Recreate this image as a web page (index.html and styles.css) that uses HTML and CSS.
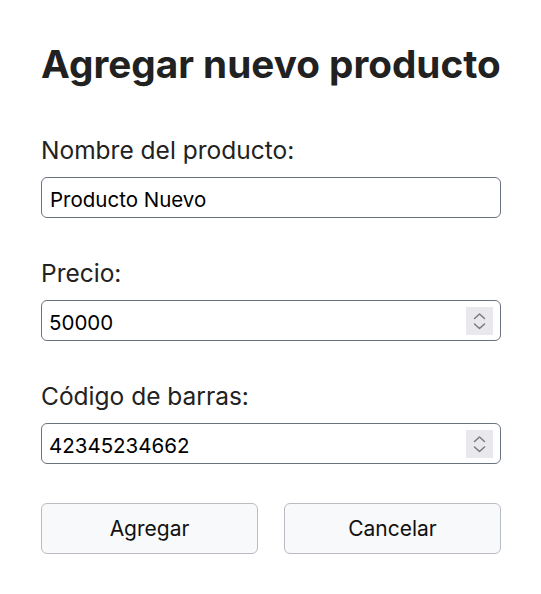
FILE: index.html
```html
<!DOCTYPE html>
<html lang="es">
<head>
<meta charset="utf-8">
<title>Agregar nuevo producto</title>
<link rel="stylesheet" href="styles.css">
</head>
<body>
<main class="form-card">
  <h1 class="title">Agregar nuevo producto</h1>
  <form class="form">
    <div class="field">
      <label class="label" for="nombre">Nombre del producto:</label>
      <input class="input" id="nombre" type="text" value="Producto Nuevo">
    </div>
    <div class="field">
      <label class="label" for="precio">Precio:</label>
      <div class="num-box">
        <input class="num-input" id="precio" type="number" value="50000">
        <span class="spinner" aria-hidden="true">
          <svg width="27" height="28" viewBox="0 0 27 28"><path d="M8.5 11.5 L13.5 7 L18.5 11.5" fill="none" stroke="#7a7a7a" stroke-width="1.5" stroke-linecap="round" stroke-linejoin="round"/><path d="M8.5 17 L13.5 21.5 L18.5 17" fill="none" stroke="#7a7a7a" stroke-width="1.5" stroke-linecap="round" stroke-linejoin="round"/></svg>
        </span>
      </div>
    </div>
    <div class="field">
      <label class="label" for="codigo">Código de barras:</label>
      <div class="num-box">
        <input class="num-input" id="codigo" type="number" value="42345234662">
        <span class="spinner" aria-hidden="true">
          <svg width="27" height="28" viewBox="0 0 27 28"><path d="M8.5 11.5 L13.5 7 L18.5 11.5" fill="none" stroke="#7a7a7a" stroke-width="1.5" stroke-linecap="round" stroke-linejoin="round"/><path d="M8.5 17 L13.5 21.5 L18.5 17" fill="none" stroke="#7a7a7a" stroke-width="1.5" stroke-linecap="round" stroke-linejoin="round"/></svg>
        </span>
      </div>
    </div>
    <div class="actions">
      <button class="btn" type="button">Agregar</button>
      <button class="btn" type="button">Cancelar</button>
    </div>
  </form>
</main>
</body>
</html>
```
FILE: styles.css
```css
* { box-sizing: border-box; }
html, body { margin: 0; padding: 0; background: #ffffff; }
body { font-family: Inter, "Noto Sans", sans-serif; color: #222222; }
.form-card { padding: 40px 40px 40px 41px; width: 541px; }
.title { margin: 0 0 47px 0; font-size: 38.7px; font-weight: 700; line-height: 48px; color: #212121; white-space: nowrap; }
.form { display: flex; flex-direction: column; gap: 40px; }
.field { display: flex; flex-direction: column; }
.label { font-size: 24.5px; line-height: 30px; margin-bottom: 12px; color: #222; }
.input, .num-box { width: 460px; height: 41px; border: 1px solid #6b7280; border-radius: 6px; background: #fff; }
.input { padding: 3px 8px 0 8px; font-family: Inter, sans-serif; font-size: 20.5px; color: #000; outline: none; }
.num-box { display: flex; align-items: center; padding: 0 7px 0 0; }
.num-input { flex: 1; min-width: 0; height: 100%; border: 0; background: transparent; padding: 3px 0 0 7px; font-family: Inter, sans-serif; font-size: 20.5px; color: #000; outline: none; -moz-appearance: textfield; }
.num-input::-webkit-inner-spin-button, .num-input::-webkit-outer-spin-button { -webkit-appearance: none; margin: 0; }
.spinner { display: block; width: 27px; height: 28px; background: #e9e9ed; }
.spinner svg { display: block; }
.actions { display: flex; gap: 26px; width: 460px; margin-top: -1px; }
.btn { flex: 1; height: 51px; border: 1px solid #b9bcc1; border-radius: 6px; background: #f8f9fa; font-family: Inter, sans-serif; font-size: 21px; color: #111; }
```
